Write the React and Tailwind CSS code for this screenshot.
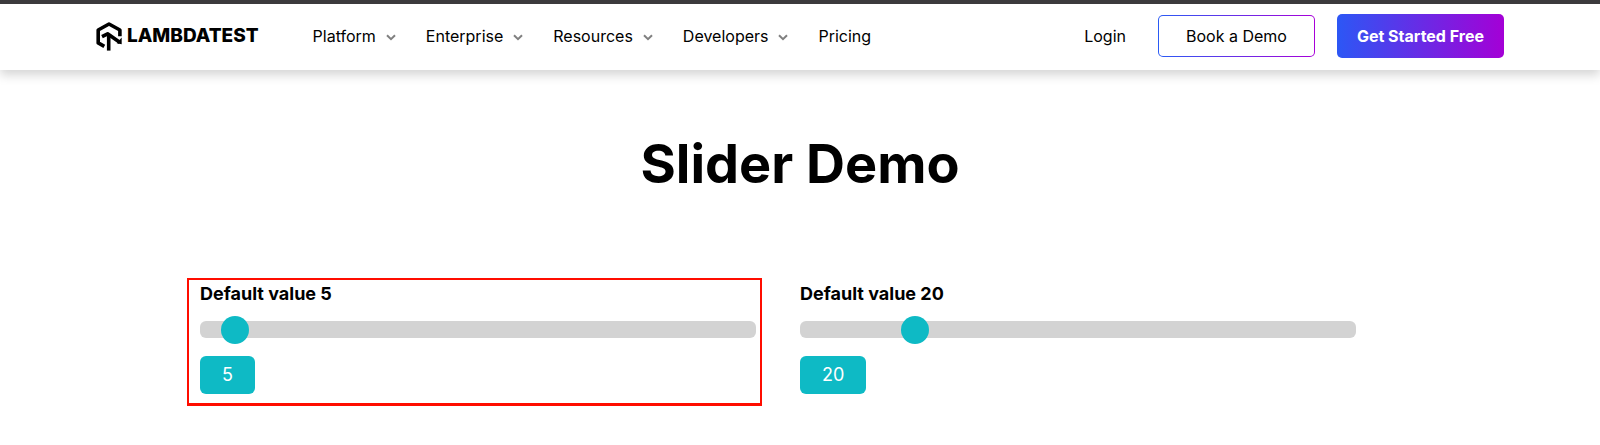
import { useState } from "react";

const NAV_ITEMS = [
  { label: "Platform", menu: true },
  { label: "Enterprise", menu: true },
  { label: "Resources", menu: true },
  { label: "Developers", menu: true },
  { label: "Pricing", menu: false },
];

function LogoMark() {
  return (
    <svg width="27" height="29" viewBox="0 0 27 29" fill="none" aria-hidden="true">
      <g stroke="#000" strokeWidth="3.6">
        <path d="M8.3 24.4 2.2 20.9V8L13 2l10.9 6v6.2" strokeLinejoin="round" />
        <path d="M6 14.6 11.6 11.8 24 20.4" strokeLinejoin="round" />
        <path d="M12.7 12.5V28.6" />
      </g>
      <path d="M25.7 15.6v6.6l-5-.9z" fill="#000" />
    </svg>
  );
}

function Chevron() {
  return (
    <svg width="10" height="7" viewBox="0 0 10 7" fill="none" className="mt-0.5" aria-hidden="true">
      <path d="M1 1.2l4 4 4-4" stroke="#808080" strokeWidth="2" />
    </svg>
  );
}

function Header() {
  return (
    <header className="border-t-4 border-[#3c3a3d] bg-white shadow-[0_5px_10px_rgba(0,0,0,0.17)]">
      <div className="flex h-[66px] items-center justify-between px-24 pb-0.5">
        <div className="flex items-center gap-[54px]">
          <a href="#" className="flex items-center gap-1 text-[19px] font-extrabold">
            <LogoMark />
            LAMBDATEST
          </a>
          <nav className="flex items-center gap-[30px]">
            {NAV_ITEMS.map((item) => (
              <a key={item.label} href="#" className="flex items-center gap-2.5">
                {item.label}
                {item.menu && <Chevron />}
              </a>
            ))}
          </nav>
        </div>
        <div className="flex items-center">
          <a href="#" className="mr-8">
            Login
          </a>
          <button
            type="button"
            className="mr-[22px] h-[42px] rounded-[5px] border border-transparent px-[27px] [background:linear-gradient(#fff,#fff)_padding-box,linear-gradient(90deg,#2a5bf5,#a800d8)_border-box]"
          >
            Book a Demo
          </button>
          <button
            type="button"
            className="h-11 rounded-[5px] bg-[linear-gradient(90deg,#2c57f5,#a400d6)] px-5 font-bold text-white"
          >
            Get Started Free
          </button>
        </div>
      </div>
    </header>
  );
}

function SliderField({ initial, highlighted = false }) {
  const [value, setValue] = useState(initial);
  const id = `slider-${initial}`;

  return (
    <div className="relative">
      {highlighted && (
        <div className="pointer-events-none absolute -top-1 -right-1.5 -bottom-3 -left-[13px] border-2 border-b-3 border-[#ff0d00]" />
      )}
      <label htmlFor={id} className="block text-lg leading-6 font-bold">
        Default value {initial}
      </label>
      <input
        id={id}
        type="range"
        min={1}
        max={100}
        value={value}
        onChange={(event) => setValue(Number(event.target.value))}
        className="mt-[15px] block h-[17px] w-full appearance-none rounded-md bg-[#d3d3d3] [&::-webkit-slider-thumb]:size-7 [&::-webkit-slider-thumb]:appearance-none [&::-webkit-slider-thumb]:rounded-full [&::-webkit-slider-thumb]:bg-[#0ebac5]"
      />
      <output
        htmlFor={id}
        className="mt-[18px] block h-[38px] w-fit rounded-md bg-[#0ebac5] px-[22px] text-lg leading-[38px] text-white"
      >
        {value}
      </output>
    </div>
  );
}

export default function App() {
  return (
    <div className="bg-white font-['Inter',sans-serif] text-base text-black">
      <Header />
      <main className="pt-16 pb-12">
        <h1 className="text-center text-[54px] leading-[60px] font-bold">Slider Demo</h1>
        <section className="mt-[88px] grid grid-cols-2 gap-11 pr-[244px] pl-[200px]">
          <SliderField initial={5} highlighted />
          <SliderField initial={20} />
        </section>
      </main>
    </div>
  );
}
